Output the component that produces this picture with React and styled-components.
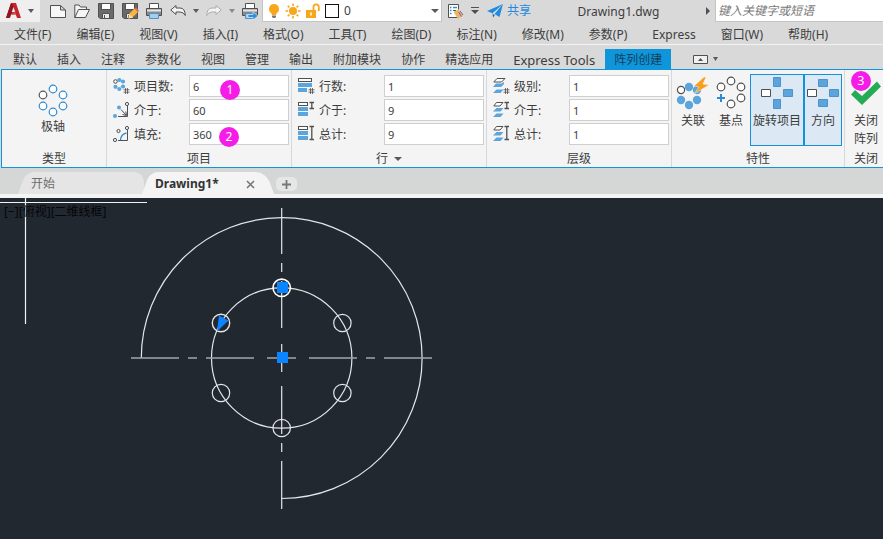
import React from "react";
import styled, { createGlobalStyle, css } from "styled-components";

const BLUE = "#1590dc";
const ICON_BLUE = "#5ba5dc";
const INK = "#3d3d3d";

const GlobalStyle = createGlobalStyle`
  *, *::before, *::after { box-sizing: border-box; }
  body {
    margin: 0;
    background: #212830;
    color: ${INK};
    font: 12px/18px "Noto Sans", "Noto Sans CJK SC", sans-serif;
  }
  button, input, select { font: inherit; color: inherit; }
  svg { display: block; flex: none; overflow: visible; }
`;

const Page = styled.div`
  display: flex;
  flex-direction: column;
  min-height: 100vh;
  overflow: hidden;
  background: #d9d9d9;
`;

const PlainButton = styled.button`
  display: flex;
  align-items: center;
  justify-content: center;
  flex: none;
  padding: 0;
  border: 0;
  background: none;
`;

/* ---------- title bar ---------- */
const TitleBar = styled.header`
  display: flex;
  align-items: center;
  height: 22px;
`;
const AppButton = styled(PlainButton)`
  gap: 7px;
  width: 40px;
  height: 22px;
  background: #efefef;
`;
const QuickTools = styled.div`
  display: flex;
  align-items: center;
  gap: 8px;
  padding: 0 4px 0 10px;
`;
const ToolButton = styled(PlainButton)`
  width: 16px;
  height: 20px;
`;
const DropButton = styled(PlainButton)`
  width: 20px;
  height: 20px;
  margin: 0 ${(p) => (p.$wide ? "-6px" : "-8px")};
`;
const LayerBox = styled.label`
  display: flex;
  align-items: center;
  gap: 5px;
  flex: none;
  width: 180px;
  height: 22px;
  padding: 0 2px 0 5px;
  border: 1px solid #c4c4c4;
  border-top: 0;
  background: #fff;
`;
const Swatch = styled.span`
  width: 14px;
  height: 14px;
  border: 1px solid #111;
  background: #fff;
`;
const LayerSelect = styled.select`
  flex: 1;
  min-width: 0;
  padding: 0;
  border: 0;
  background: none;
  appearance: none;
`;
const ShareLink = styled.a`
  display: flex;
  align-items: center;
  gap: 4px;
  flex: none;
  color: #1f8be0;
  text-decoration: none;
`;
const AfterLayer = styled.div`
  display: flex;
  align-items: center;
  gap: 8px;
  padding-left: 5px;
`;
const FileName = styled.div`
  flex: 1;
  padding-top: 2px;
  text-align: center;
  white-space: nowrap;
`;
const Search = styled.input`
  flex: none;
  width: 168px;
  height: 22px;
  margin-left: 5px;
  padding: 0 2px;
  border: 1px solid #c4c4c4;
  border-width: 0 0 1px 1px;
  background: #fff;
  &::placeholder { color: #777; font-style: italic; opacity: 1; }
`;

/* ---------- menus and ribbon tabs ---------- */
const MenuBar = styled.nav`
  display: flex;
  height: 23px;
  padding-left: 1px;
  border-bottom: 1px solid #f2f2f2;
`;
const MenuItem = styled(PlainButton)`
  padding: 3px 12px 0 13px;
  white-space: nowrap;
`;
const RibbonTabs = styled.nav`
  display: flex;
  height: 24px;
  padding: 4px 0 0 3px;
`;
const RibbonTab = styled(PlainButton)`
  padding: 2px 10px 0;
  font-size: ${(p) => (p.$latin ? "13px" : "12px")};
  white-space: nowrap;
  ${(p) => p.$active && css`
    padding: 2px 9px 0;
    background: #0f95d9;
    color: #14405c;
  `}
`;
const RibbonToggle = styled(PlainButton)`
  gap: 5px;
  margin-left: 22px;
`;

/* ---------- ribbon ---------- */
const Ribbon = styled.section`
  display: flex;
  margin-left: 1px;
  height: 99px;
  border-top: 1px solid #0f95d9;
  border-bottom: 1px solid #0f95d9;
  border-left: 1px solid #0f95d9;
  background: #f4f4f4;
`;
const Panel = styled.div`
  position: relative;
  display: flex;
  flex-direction: column;
  flex: ${(p) => (p.$w ? `0 0 ${p.$w}px` : "1 0 38px")};
  border-right: ${(p) => (p.$w ? "1px solid #d3dadd" : "0")};
`;
const PanelBody = styled.div`
  display: flex;
  flex-direction: ${(p) => (p.$rows ? "column" : "row")};
  gap: ${(p) => (p.$rows ? "2px" : "0")};
  flex: 1;
  align-items: ${(p) => (p.$rows ? "stretch" : "flex-start")};
  padding: ${(p) => p.$pad || "5px 2px 0 6px"};
`;
const PanelTitle = styled.div`
  display: flex;
  align-items: center;
  justify-content: ${(p) => (p.$start ? "flex-start" : "center")};
  gap: 6px;
  height: 18px;
  padding: 2px 0 0 ${(p) => (p.$start ? "9px" : "0")};
`;
const FieldRow = styled.label`
  display: flex;
  align-items: center;
  gap: 5px;
  height: 22px;
`;
const FieldName = styled.span`
  flex: 1;
  padding-top: 2px;
  white-space: nowrap;
`;
const FieldInput = styled.input`
  width: 100px;
  height: 22px;
  padding: 0 3px;
  border: 1px solid #cfcfcf;
  background: #fff;
  font-size: 11px;
`;
const BigButton = styled(PlainButton)`
  flex-direction: column;
  justify-content: flex-start;
  gap: 4px;
  width: ${(p) => p.$w}px;
  height: ${(p) => p.$h || 72}px;
  padding-top: 1px;
  border: 1px solid transparent;
  white-space: nowrap;
  ${(p) => p.$on && css`
    border-color: ${BLUE};
    background: #dce9f4;
  `}
`;
const Badge = styled.span`
  position: absolute;
  left: ${(p) => p.$x}px;
  top: ${(p) => p.$y}px;
  width: 20px;
  height: 20px;
  border-radius: 50%;
  background: #f61ce8;
  color: #fff;
  line-height: 20px;
  text-align: center;
`;

/* ---------- document tabs ---------- */
const DocTabs = styled.nav`
  display: flex;
  align-items: flex-end;
  height: 30px;
  padding-left: 20px;
  border-bottom: 4px solid #f4f4f4;
  background: #d5d6d6;
`;
const DocTab = styled.div`
  position: relative;
  display: flex;
  align-items: center;
  justify-content: space-between;
  width: ${(p) => p.$w}px;
  height: 22px;
  padding: 2px 19px 0 11px;
  color: ${(p) => (p.$active ? "#333" : "#6d6d6d")};
  font-weight: ${(p) => (p.$active ? 700 : 400)};
  z-index: 0;
  &::before, &::after {
    content: "";
    position: absolute;
    z-index: -1;
    top: 0;
    bottom: 0;
    background: ${(p) => (p.$active ? "#f4f4f4" : "#e5e5e5")};
  }
  &::before { left: 2px; right: 30px; transform: skewX(-20deg); border-radius: 8px 0 0 0; }
  &::after {
    left: 20px;
    right: ${(p) => (p.$active ? "4px" : "0")};
    transform: skewX(${(p) => (p.$active ? 20 : 0)}deg);
    border-radius: 0 10px 0 0;
  }
`;
const DocName = styled(PlainButton)`
  font-weight: inherit;
`;
const AddTab = styled(PlainButton)`
  width: 21px;
  height: 14px;
  margin: 0 0 3px 2px;
  border-radius: 5px;
  background: #e6e6e6;
`;

/* ---------- drawing area ---------- */
const Canvas = styled.main`
  position: relative;
  flex: 1;
  min-height: 341px;
  background: #212830;
`;
const ViewLabel = styled.div`
  position: absolute;
  left: 4px;
  top: 5px;
  color: #050608;
`;

/* ---------- icons ---------- */
const Icon = ({ w = 16, h = 16, children }) => (
  <svg width={w} height={h} viewBox={`0 0 ${w} ${h}`} fill="none" stroke="#505050" aria-hidden="true">
    {children}
  </svg>
);
const Caret = ({ color = "#5a5a5a", w = 6 }) => (
  <svg width={w} height="4" viewBox="0 0 8 5" preserveAspectRatio="none" aria-hidden="true">
    <path d="M0 0H8L4 5Z" fill={color} />
  </svg>
);
const Logo = () => (
  <Icon w={15} h={16}>
    <g stroke="none">
      <path d="M5 0H10L15 15H11L9.8 11.5H5L3.8 15H0Z" fill="#c4242b" />
      <path d="M5 0L7.6 3L3.8 15H0Z" fill="#8f1820" />
      <path d="M7.5 4L9.2 9H5.8Z" fill="#efefef" />
      <path d="M5 11.5L9.2 9L9.8 11.5Z" fill="#e2524f" />
    </g>
  </Icon>
);
const NewIcon = () => (
  <Icon><path d="M.5 2.5H10.5L15.5 7V14.5H.5ZM10.5 2.5V7H15.5" fill="#f7f7f7" /></Icon>
);
const OpenIcon = () => (
  <Icon><path d="M.8 14.5V2H5L6.5 4H12.5V6.5M.8 14.5L4.5 6.5H15.5L11.5 14.5Z" fill="#f5f5f5" /></Icon>
);
const SaveBody = () => (
  <g>
    <path d="M.5 .5H15.5V15.5H2L.5 14Z" fill="#6a6a6a" />
    <path d="M3.5 .5H12.5V6.5H3.5Z" fill="#fff" />
    <path d="M4.5 10.5H11.5V15.5H4.5Z" fill="#e9e9e9" />
    <path d="M6.5 12V15" />
  </g>
);
const SaveIcon = () => <Icon><SaveBody /></Icon>;
const SaveAsIcon = () => (
  <Icon>
    <SaveBody />
    <path d="M7 11L12.5 5.5L16 9L10.5 14.5L6.5 15.5Z" fill="#f6b73c" stroke="none" />
    <path d="M12.5 5.5L14 4.5L17 7.5L16 9Z" fill="#e86d52" stroke="none" />
    <path d="M6.5 15.5L7 11L10.5 14.5Z" fill="#f6dfb7" stroke="none" />
  </Icon>
);
const PrintBody = () => (
  <g>
    <path d="M3.5 6V.5H12.5V6" fill="#fff" />
    <path d="M.5 5.5H15.5V12.5H.5Z" fill="#8a8a8a" />
    <path d="M1 7.5H15" stroke="#e6e6e6" strokeWidth="2" />
    <path d="M3.5 10.5H12.5V15.5H3.5Z" fill="#9ed0f3" stroke="#5b90b8" />
  </g>
);
const PrintIcon = () => <Icon><PrintBody /></Icon>;
const PlotIcon = () => (
  <Icon>
    <PrintBody />
    <path d="M6 11.5H11V9L16 13L11 17V14.5H6Z" fill="#2f8fdd" stroke="#e5f1fa" strokeWidth=".6" />
  </Icon>
);
const UndoIcon = ({ flip, color = "#505050" }) => (
  <Icon>
    <path
      d="M.8 7L6 2.5V5H10Q15 5 15.3 12.5Q13.5 9 10 9H6V11.5Z"
      fill="#f3f3f3"
      stroke={color}
      transform={flip ? "matrix(-1 0 0 1 16 0)" : undefined}
    />
  </Icon>
);
const BulbIcon = () => (
  <Icon w={12}>
    <g stroke="none">
      <path d="M6 1A5 5 0 0 0 3.3 10.2L4 12H8L8.7 10.2A5 5 0 0 0 6 1Z" fill="#f8a71b" />
      <path d="M4 12.5H8V14L7 15H5L4 14Z" fill="#777" />
    </g>
  </Icon>
);
const SunIcon = () => (
  <Icon>
    <circle cx="8" cy="8" r="4" fill="#f8a71b" stroke="none" />
    <path d="M8 .5V3M8 13V15.5M.5 8H3M13 8H15.5M2.7 2.7L4.4 4.4M11.6 11.6L13.3 13.3M2.7 13.3L4.4 11.6M11.6 4.4L13.3 2.7" stroke="#f8a71b" strokeWidth="1.6" />
  </Icon>
);
const LockIcon = () => (
  <Icon w={14}>
    <path d="M0 7H10V15H0Z" fill="#f8a71b" stroke="none" />
    <path d="M7.5 7V4A2.5 2.5 0 0 1 12.8 4V8" stroke="#f8a71b" strokeWidth="1.8" />
    <path d="M5 9.5V12.5" stroke="#fff" strokeWidth="1.5" />
  </Icon>
);
const LayerPropsIcon = () => (
  <Icon>
    <path d="M1.5 1.5H11.5V14.5H1.5Z" fill="#fff" />
    <path d="M3 4.5H4.5M6 4.5H10M3 7.5H4.5M3 10.5H4.5" stroke="#2f8fdd" strokeWidth="1.5" />
    <path d="M6 7.5H9" />
    <path d="M6.5 9L11.5 6L16 12.5L11 16Z" fill="#e9b868" stroke="none" />
    <path d="M11.5 9L14.5 13.5M13 8L16 12" stroke="#8059a2" />
  </Icon>
);
const PlaneIcon = () => (
  <Icon>
    <g stroke="none">
      <path d="M0 8L16 1L12.5 14L7.5 11L16 1L5.5 10.2Z" fill="#1f8be0" />
      <path d="M5.5 10.5L7.8 12.2L6 14.5Z" fill="#1769ae" />
    </g>
  </Icon>
);

const RING = [[16, 5], [6, 11], [26, 11], [6, 22], [26, 22], [16, 28]];
const PolarIcon = () => (
  <Icon w={32} h={32}>
    <g transform="translate(0 2)" strokeWidth="1.2">
      {RING.map(([x, y], i) => (
        <circle key={i} cx={x} cy={y} r="3.8" fill="#fff" stroke={i === 1 ? "#555" : "#2f8bd0"} />
      ))}
    </g>
  </Icon>
);
const AssociateIcon = () => (
  <Icon w={34} h={32}>
    <circle cx="5" cy="14" r="3.6" fill="#fff" strokeWidth="1.2" />
    {[[13, 11], [21, 14], [5, 24], [21, 24], [13, 29]].map(([x, y], i) => (
      <circle key={i} cx={x} cy={y} r="4.2" fill={ICON_BLUE} stroke="none" />
    ))}
    <path d="M28 1L18 10L23 11L18 18L33 9L27 8L30 1Z" fill="#f9a01b" stroke="#f4f4f4" strokeWidth=".5" />
  </Icon>
);
const BasePointIcon = () => (
  <Icon w={32} h={32}>
    {RING.filter((_, i) => i !== 3).map(([x, y], i) => (
      <circle key={i} cx={x} cy={y} r="3.8" fill="#fff" strokeWidth="1.2" />
    ))}
    <path d="M2 22H10M6 18V26" stroke="#2f8bd0" strokeWidth="2" />
  </Icon>
);
const RotateIcon = () => (
  <Icon w={32} h={32}>
    <path d="M12.5 1.5H19.5V10.5H12.5ZM22.5 13.5H31.5V20.5H22.5ZM12.5 23.5H19.5V32.5H12.5Z" fill={ICON_BLUE} stroke="#4c93c9" />
    <path d="M.5 13.5H9.5V20.5H.5Z" fill="#fff" />
  </Icon>
);
const DirectionIcon = () => (
  <Icon w={32} h={32}>
    <path d="M11.5 3.5H20.5V10.5H11.5ZM22.5 13.5H31.5V20.5H22.5ZM11.5 23.5H20.5V30.5H11.5Z" fill={ICON_BLUE} stroke="#4c93c9" />
    <path d="M.5 13.5H9.5V20.5H.5Z" fill="#fff" />
  </Icon>
);
const CheckIcon = () => (
  <Icon w={32} h={32}>
    <path d="M1 18.5L5 14L12 20L27 5.5L31 10.5L12 29Z" fill="#25ab55" stroke="none" />
  </Icon>
);

const Hash = () => <path d="M12.5 10V16M14.5 10V16M10.5 11.8H16.5M10.5 14.2H16.5" strokeWidth=".8" />;
const CountIcon = () => (
  <Icon>
    <circle cx="2.5" cy="3.5" r="1.8" />
    {[[6.3, 2], [10, 3.5], [2.5, 8.8], [6.3, 11], [10, 8.5]].map(([x, y], i) => (
      <circle key={i} cx={x} cy={y} r="2.1" fill={ICON_BLUE} stroke="none" />
    ))}
    <Hash />
  </Icon>
);
const AngleIcon = () => (
  <Icon>
    <path d="M14.5 4V14.5H5M8 7.5L13 13M9.5 12.5L13.5 13.5L12.8 9.5" />
    <circle cx="14" cy="2" r="1.6" />
    <circle cx="6" cy="5.5" r="2" fill={ICON_BLUE} stroke="none" />
    <circle cx="2" cy="14" r="2" fill={ICON_BLUE} stroke="none" />
  </Icon>
);
const FillIcon = () => (
  <Icon>
    <path d="M14.5 4V14.5H5" />
    <path d="M7.5 14Q8 8 13.5 7" stroke="#2f8bd0" strokeWidth="1.3" />
    <circle cx="14" cy="2" r="1.6" />
    <circle cx="5.5" cy="5" r="1.6" />
    <circle cx="2" cy="14" r="1.6" />
  </Icon>
);
const Extra = ({ kind }) => {
  if (kind === "count") return <Hash />;
  const end = kind === "gap" ? 6.5 : 13.5;
  return <path d={`M11.5 .5H16M11.5 ${end}H16M13.8 .5V${end}`} strokeWidth="1.3" />;
};
const RowIcon = ({ kind }) => {
  const w = kind === "count" ? 14 : 10;
  return (
    <Icon>
      <rect x=".5" y=".5" width={w - 1} height="3" fill="#fff" />
      <g fill={ICON_BLUE} stroke="none">
        <rect y="5" width={w} height="4" />
        <rect y="10" width={kind === "count" ? 9 : 10} height="4" />
      </g>
      <Extra kind={kind} />
    </Icon>
  );
};
const LevelIcon = ({ kind }) => (
  <Icon>
    <path d={kind === "count" ? "M4 .5H12L8.5 4H.8Z" : "M3.5 .5H10L7 4H.8Z"} fill="#fff" />
    <g fill={ICON_BLUE} stroke="none">
      <path d={kind === "count" ? "M3 5.5H8.5L11 4V6L8 9H0Z" : "M3.5 6H10.5L7.5 9.5H0Z"} />
      <path d="M3.5 11.5H10.5L7.5 15H0Z" />
    </g>
    <Extra kind={kind} />
  </Icon>
);

/* ---------- data ---------- */
const MENUS = ["文件(F)", "编辑(E)", "视图(V)", "插入(I)", "格式(O)", "工具(T)", "绘图(D)", "标注(N)", "修改(M)", "参数(P)", "Express", "窗口(W)", "帮助(H)"];
const TABS = ["默认", "插入", "注释", "参数化", "视图", "管理", "输出", "附加模块", "协作", "精选应用", "Express Tools", "阵列创建"];
const FIELD_PANELS = [
  {
    title: "项目", width: 185,
    rows: [["项目数:", "6", <CountIcon />], ["介于:", "60", <AngleIcon />], ["填充:", "360", <FillIcon />]],
    badges: [[1, 113, 10], [2, 112, 57]],
  },
  {
    title: "行", width: 195, more: true,
    rows: [["行数:", "1", <RowIcon kind="count" />], ["介于:", "9", <RowIcon kind="gap" />], ["总计:", "9", <RowIcon kind="total" />]],
  },
  {
    title: "层级", width: 185,
    rows: [["级别:", "1", <LevelIcon kind="count" />], ["介于:", "1", <LevelIcon kind="gap" />], ["总计:", "1", <LevelIcon kind="total" />]],
  },
];

const Drawing = () => (
  <svg width="440" height="341" viewBox="0 0 440 341" fill="none" stroke="#e4e6e8" strokeWidth="1.2" role="img" aria-label="环形阵列">
    <path d="M25.5 0V126M0 4.5H147" stroke="#f2f2f2" />
    <path d="M141.3 160A140.4 140.4 0 1 1 281.7 300.5" />
    <circle cx="281.7" cy="160" r="70.2" />
    <path d="M281.7 10V56M281.7 65V74M281.7 83V130M281.7 146V174M281.7 188V236M281.7 245V254M281.7 263V311" />
    <path d="M131 160H179M188 160H197M206 160H254M267 160H296M309 160H357M366 160H375M384 160H432" stroke="#a2a5a9" strokeWidth="1.6" />
    {[[342.4, 125], [342.4, 195], [281.7, 230], [221, 195]].map(([x, y], i) => (
      <circle key={i} cx={x} cy={y} r="8.7" />
    ))}
    <circle cx="281.7" cy="89.8" r="8.7" stroke="#fff" strokeWidth="1.6" />
    <circle cx="221" cy="125" r="8.7" strokeWidth="1.4" />
    <g fill="#0a84ff" stroke="none">
      <rect x="277" y="84" width="11" height="11" />
      <rect x="277" y="154" width="11" height="11" />
      <path d="M219 117.5L228.5 122.5L217 133.5Z" />
    </g>
  </svg>
);

export default function App() {
  return (
    <Page>
      <GlobalStyle />
      <TitleBar>
        <AppButton aria-label="应用程序菜单"><Logo /><Caret /></AppButton>
        <QuickTools>
          <ToolButton aria-label="新建"><NewIcon /></ToolButton>
          <ToolButton aria-label="打开"><OpenIcon /></ToolButton>
          <ToolButton aria-label="保存"><SaveIcon /></ToolButton>
          <ToolButton aria-label="另存为"><SaveAsIcon /></ToolButton>
          <ToolButton aria-label="打印"><PrintIcon /></ToolButton>
          <ToolButton aria-label="放弃"><UndoIcon /></ToolButton>
          <DropButton aria-label="放弃列表"><Caret /></DropButton>
          <ToolButton aria-label="重做"><UndoIcon flip color="#adadad" /></ToolButton>
          <DropButton aria-label="重做列表"><Caret color="#8a8a8a" /></DropButton>
          <ToolButton aria-label="批处理打印"><PlotIcon /></ToolButton>
        </QuickTools>
        <LayerBox>
          <BulbIcon /><SunIcon /><LockIcon /><Swatch />
          <LayerSelect aria-label="图层" defaultValue="0"><option>0</option></LayerSelect>
          <Caret w={8} />
        </LayerBox>
        <AfterLayer>
          <ToolButton aria-label="图层特性"><LayerPropsIcon /></ToolButton>
          <DropButton $wide aria-label="自定义">
            <Icon w={8} h={8}><path d="M0 .5H8" /><path d="M0 3H8L4 7Z" fill="#505050" stroke="none" /></Icon>
          </DropButton>
          <ShareLink href="#share"><PlaneIcon />共享</ShareLink>
        </AfterLayer>
        <FileName>Drawing1.dwg</FileName>
        <Icon w={4} h={8}><path d="M0 0L4 4L0 8Z" fill="#505050" stroke="none" /></Icon>
        <Search aria-label="搜索" placeholder="键入关键字或短语" />
      </TitleBar>

      <MenuBar>{MENUS.map((m) => <MenuItem key={m}>{m}</MenuItem>)}</MenuBar>

      <RibbonTabs>
        {TABS.map((t) => (
          <RibbonTab key={t} $active={t === "阵列创建"} $latin={t === "Express Tools"}>{t}</RibbonTab>
        ))}
        <RibbonToggle aria-label="最小化功能区">
          <Icon w={15} h={9}>
            <path d="M.5 .5H14.5V8.5H.5Z" fill="#f0f0f0" />
            <path d="M5 6L7.5 3L10 6Z" fill="#505050" stroke="none" />
          </Icon>
          <Caret w={5} />
        </RibbonToggle>
      </RibbonTabs>

      <Ribbon>
        <Panel $w={105}>
          <PanelBody $pad="10px 0 0 27px">
            <BigButton $w={48} $h={66}><PolarIcon />极轴</BigButton>
          </PanelBody>
          <PanelTitle>类型</PanelTitle>
        </Panel>
        {FIELD_PANELS.map((p) => (
          <Panel key={p.title} $w={p.width}>
            <PanelBody $rows>
              {p.rows.map(([name, value, icon]) => (
                <FieldRow key={name}>
                  {icon}
                  <FieldName>{name}</FieldName>
                  <FieldInput defaultValue={value} />
                </FieldRow>
              ))}
            </PanelBody>
            <PanelTitle>{p.title}{p.more && <Caret w={8} />}</PanelTitle>
            {(p.badges || []).map(([n, x, y]) => <Badge key={n} $x={x} $y={y}>{n}</Badge>)}
          </Panel>
        ))}
        <Panel $w={173}>
          <PanelBody $pad="4px 0 0 2px">
            <BigButton $w={38}><AssociateIcon />关联</BigButton>
            <BigButton $w={38}><BasePointIcon />基点</BigButton>
            <BigButton $w={54} $on aria-pressed="true"><RotateIcon />旋转项目</BigButton>
            <BigButton $w={38} $on aria-pressed="true"><DirectionIcon />方向</BigButton>
          </PanelBody>
          <PanelTitle>特性</PanelTitle>
        </Panel>
        <Panel>
          <PanelBody $pad="4px 0 0 4px">
            <BigButton $w={34}><CheckIcon /><span>关闭<br />阵列</span></BigButton>
          </PanelBody>
          <PanelTitle $start>关闭</PanelTitle>
          <Badge $x={6} $y={1}>3</Badge>
        </Panel>
      </Ribbon>

      <DocTabs>
        <DocTab $w={124}><DocName>开始</DocName></DocTab>
        <DocTab $w={130} $active>
          <DocName>Drawing1*</DocName>
          <PlainButton aria-label="关闭图形">
            <Icon w={9} h={9}><path d="M1 1L8 8M8 1L1 8" stroke="#777" strokeWidth="1.6" /></Icon>
          </PlainButton>
        </DocTab>
        <AddTab aria-label="新图形">
          <Icon w={9} h={9}><path d="M0 4.5H9M4.5 0V9" stroke="#777" strokeWidth="1.8" /></Icon>
        </AddTab>
      </DocTabs>

      <Canvas>
        <Drawing />
        <ViewLabel>[−][俯视][二维线框]</ViewLabel>
      </Canvas>
    </Page>
  );
}
